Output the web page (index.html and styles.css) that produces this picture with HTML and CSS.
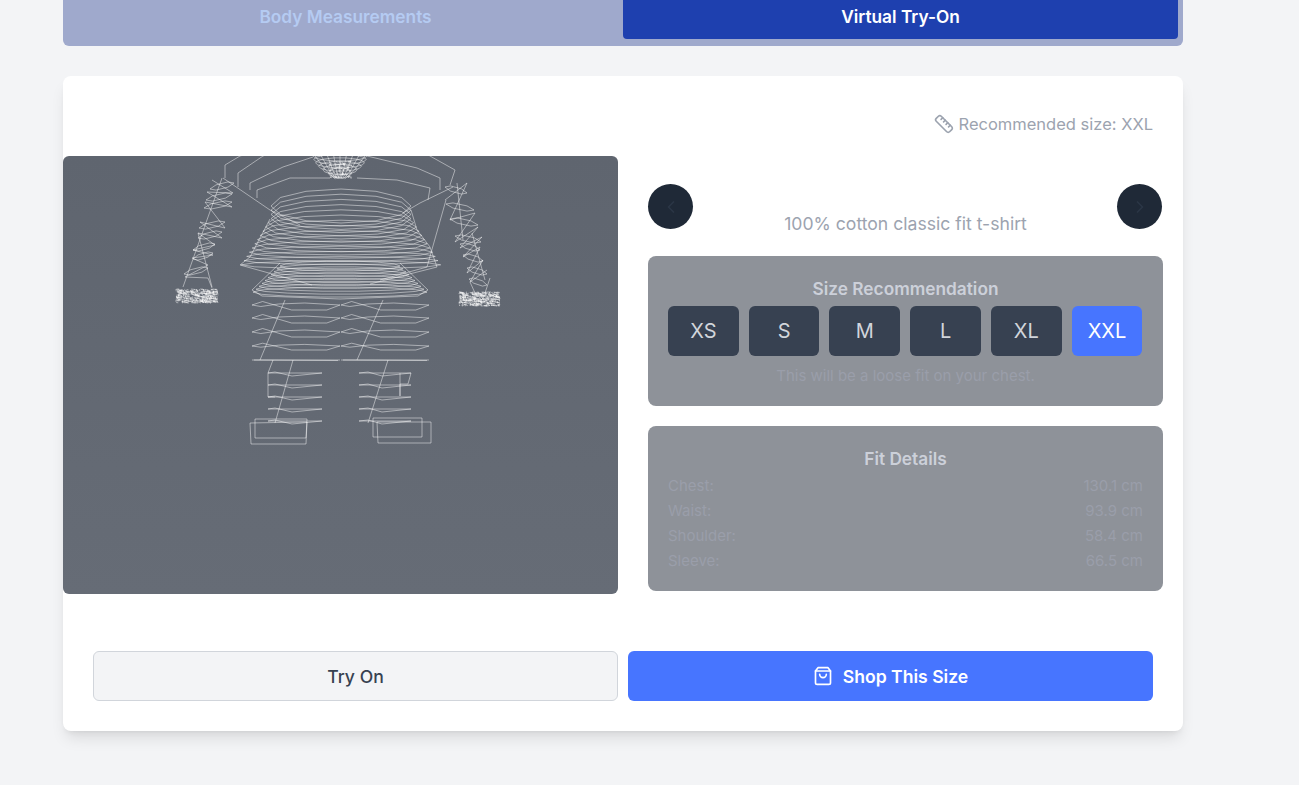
FILE: index.html
```html
<!DOCTYPE html>
<html lang="en">
<head>
    <meta charset="UTF-8">
    <meta name="viewport" content="width=device-width, initial-scale=1.0">
    <title>Virtual Try-On</title>
    <link rel="stylesheet" href="styles.css">
</head>
<body>
    <div class="page">
        <div class="tabs">
            <button class="tab">Body Measurements</button>
            <button class="tab active">Virtual Try-On</button>
        </div>

        <div class="card">
            <div class="card-head">
                <svg class="icon" width="20" height="20" viewBox="0 0 24 24">
                    <path d="M21.3 15.3a2.4 2.4 0 0 1 0 3.4l-2.6 2.6a2.4 2.4 0 0 1-3.4 0L2.7 8.7a2.41 2.41 0 0 1 0-3.4l2.6-2.6a2.41 2.41 0 0 1 3.4 0Z"/>
                    <path d="m14.5 12.5 2-2"/><path d="m11.5 9.5 2-2"/><path d="m8.5 6.5 2-2"/><path d="m17.5 15.5 2-2"/>
                </svg>
                <span>Recommended size: XXL</span>
            </div>

            <div class="main">
                <div class="viewer">
                    <svg id="model" class="model" width="555" height="438" viewBox="63 156 555 438"></svg>
                </div>

                <div class="side">
                    <div class="carousel">
                        <button class="arrow prev">
                            <svg class="icon" width="20" height="20" viewBox="0 0 24 24"><path d="m15 18-6-6 6-6"/></svg>
                        </button>
                        <p class="caption">100% cotton classic fit t-shirt</p>
                        <button class="arrow next">
                            <svg class="icon" width="20" height="20" viewBox="0 0 24 24"><path d="m9 18 6-6-6-6"/></svg>
                        </button>
                    </div>

                    <div class="panel">
                        <h3>Size Recommendation</h3>
                        <div class="sizes">
                            <button class="size">XS</button>
                            <button class="size">S</button>
                            <button class="size">M</button>
                            <button class="size">L</button>
                            <button class="size">XL</button>
                            <button class="size active">XXL</button>
                        </div>
                        <p class="hint">This will be a loose fit on your chest.</p>
                    </div>

                    <div class="panel details">
                        <h3>Fit Details</h3>
                        <div class="row"><span>Chest:</span><span>130.1 cm</span></div>
                        <div class="row"><span>Waist:</span><span>93.9 cm</span></div>
                        <div class="row"><span>Shoulder:</span><span>58.4 cm</span></div>
                        <div class="row"><span>Sleeve:</span><span>66.5 cm</span></div>
                    </div>
                </div>
            </div>

            <div class="actions">
                <button class="btn btn-light">Try On</button>
                <button class="btn btn-primary">
                    <svg class="icon" width="20" height="20" viewBox="0 0 24 24">
                        <path d="M6 2 3 6v14a2 2 0 0 0 2 2h14a2 2 0 0 0 2-2V6l-3-4Z"/>
                        <path d="M3 6h18"/>
                        <path d="M16 10a4 4 0 0 1-8 0"/>
                    </svg>
                    Shop This Size
                </button>
            </div>
        </div>
    </div>

    <script src="model.js"></script>
</body>
</html>
```

FILE: styles.css
```css
* {
    box-sizing: border-box;
}

body {
    font-family: Inter, "Liberation Sans", sans-serif;
    margin: 0;
    padding: 0;
    background-color: #f3f4f6;
    color: #1f2937;
}

button {
    font-family: inherit;
    border: none;
    cursor: pointer;
}

.icon {
    fill: none;
    stroke: currentColor;
    stroke-width: 2;
    stroke-linecap: round;
    stroke-linejoin: round;
    flex-shrink: 0;
}

.page {
    width: 1120px;
    margin-left: 63px;
    padding-bottom: 54px;
}

.tabs {
    display: flex;
    padding: 0 5px 7px;
    background-color: #9fa9cc;
    border-radius: 0 0 6px 6px;
}

.tab {
    flex: 1;
    height: 39px;
    padding: 0 0 6px;
    background: none;
    font-size: 17.3px;
    font-weight: 600;
    color: #b5cbf2;
    border-radius: 0 0 4px 4px;
}

.tab.active {
    background-color: #1e40af;
    color: #fff;
}

.card {
    margin-top: 30px;
    background: #fff;
    border-radius: 8px;
    box-shadow: 0 10px 15px -3px rgba(0, 0, 0, 0.1), 0 4px 6px -4px rgba(0, 0, 0, 0.1);
    padding-bottom: 30px;
}

.card-head {
    display: flex;
    justify-content: flex-end;
    align-items: center;
    gap: 5px;
    padding: 36px 30px 20px;
    font-size: 16.5px;
    line-height: 24px;
    color: #9ca3af;
}

.main {
    display: grid;
    grid-template-columns: 555px 515px;
    gap: 30px;
}

.viewer {
    height: 438px;
    background: linear-gradient(#5f656f, #666c76);
    border-radius: 6px;
    overflow: hidden;
}

.model {
    display: block;
}

.model polygon,
.model polyline {
    fill: none;
    stroke: #fff;
    stroke-opacity: 0.55;
    stroke-width: 0.85;
}

.carousel {
    position: relative;
    height: 100px;
    padding-top: 56px;
}

.caption {
    margin: 0;
    text-align: center;
    font-size: 17.6px;
    line-height: 24px;
    color: #9ca3af;
}

.arrow {
    position: absolute;
    top: 28px;
    width: 45px;
    height: 45px;
    display: flex;
    align-items: center;
    justify-content: center;
    padding: 0;
    border-radius: 50%;
    background-color: #1f2937;
    color: #2b3646;
}

.arrow.prev {
    left: 0;
}

.arrow.next {
    right: 1px;
}

.panel {
    padding: 21px 20px 20px;
    background-color: #8e9299;
    border-radius: 8px;
}

.panel h3 {
    margin: 0 0 5px;
    text-align: center;
    font-size: 17.3px;
    line-height: 24px;
    font-weight: 600;
    color: #ccd0d9;
}

.sizes {
    display: grid;
    grid-template-columns: repeat(6, 1fr);
    gap: 10px;
    width: 474.4px;
}

.size {
    height: 50px;
    padding: 0;
    font-size: 20px;
    color: #d1d5db;
    background-color: #374151;
    border-radius: 6px;
}

.size.active {
    background-color: #4775ff;
    color: #fff;
}

.hint {
    margin: 10px 0 0;
    text-align: center;
    font-size: 15px;
    line-height: 20px;
    color: #9a9eaa;
}

.details {
    margin-top: 20px;
    padding-bottom: 18px;
}

.details h3 {
    margin-bottom: 2px;
}

.row {
    display: flex;
    justify-content: space-between;
    font-size: 15px;
    line-height: 25px;
    color: #9a9eaa;
}

.actions {
    display: grid;
    grid-template-columns: 1fr 1fr;
    gap: 10px;
    margin-top: 57px;
    padding: 0 30px;
}

.btn {
    display: flex;
    align-items: center;
    justify-content: center;
    gap: 10px;
    height: 50px;
    font-size: 17.6px;
    border-radius: 6px;
}

.btn-light {
    background-color: #f3f4f6;
    border: 1px solid #d1d5db;
    font-weight: 500;
    color: #374151;
}

.btn-primary {
    background-color: #4775ff;
    font-weight: 600;
    color: #fff;
}
```

FILE: model.js
```js
// wireframe body, coordinates are the same as the page so it is easy to tune
const svg = document.getElementById('model');
const NS = 'http://www.w3.org/2000/svg';
let out = [];

let seed = 7;
function rnd() {
    seed = (seed * 16807) % 2147483647;
    return seed / 2147483647;
}

function line(points, closed) {
    const el = document.createElementNS(NS, closed ? 'polygon' : 'polyline');
    el.setAttribute('points', points.map(p => p[0].toFixed(1) + ',' + p[1].toFixed(1)).join(' '));
    out.push(el);
}

// flat ring seen from slightly above, n sides, tips left and right
function ring(cx, cy, rx, ry, n, tilt) {
    const pts = [];
    for (let i = 0; i < n; i++) {
        const a = (i / n) * Math.PI * 2;
        const x = Math.cos(a) * rx;
        pts.push([cx + x, cy + Math.sin(a) * ry + (x / rx) * (tilt || 0)]);
    }
    line(pts, true);
}

// one leg slice: flat on top, with a kink near the outer end and a sagging belly
function lobe(x1, x2, y, sag) {
    const w = x2 - x1;
    line([
        [x1, y], [x1 + w * 0.12, y - sag * 0.7], [x1 + w * 0.45, y + sag], [x1 + w * 0.85, y + sag],
        [x2, y], [x1 + w * 0.6, y - sag * 0.4], [x1 + w * 0.3, y - sag * 0.2], [x1 + w * 0.1, y + sag * 0.3]
    ], true);
}

// dense mesh: short strokes, mostly along the axes
function noiseBox(x1, y1, x2, y2, count) {
    for (let i = 0; i < count; i++) {
        const x = x1 + rnd() * (x2 - x1);
        const y = y1 + rnd() * (y2 - y1);
        const flat = rnd() > 0.4;
        const len = (rnd() - 0.5) * 10;
        const nx = Math.min(x2, Math.max(x1, x + (flat ? len : len * 0.2)));
        const ny = Math.min(y2, Math.max(y1, y + (flat ? len * 0.15 : len * 0.7)));
        line([[x, y], [nx, ny]]);
    }
}

// shoulders, the big arcs over the chest
const arcs = [
    [[225, 178], [225, 165], [240, 156], [262, 150]],
    [[238, 187], [238, 173], [263, 156], [280, 150]],
    [[250, 190], [250, 183], [283, 167], [313, 157]],
    [[257, 198], [257, 190], [290, 178], [330, 178]],
    [[357, 178], [397, 180], [430, 188], [428, 200]],
    [[440, 190], [440, 178], [417, 168], [367, 156]],
    [[450, 185], [455, 170], [430, 156], [420, 150]],
    [[223, 178], [270, 210], [300, 225]],
    [[453, 187], [420, 203], [403, 213]]
];
arcs.forEach(a => line(a));

// chest and belly, lens shaped rings that get flatter and wider going down
for (let i = 0; i < 15; i++) {
    const cy = 206 + i * 4.2;
    const ry = Math.max(4, 17 - i * 1.0);
    const rx = 70 + Math.max(0, i - 3) * 2.7;
    ring(341, cy, rx, ry, 12);
}
line([[270, 219], [250, 257], [240, 265], [312, 285]]);
line([[411, 210], [417, 230], [430, 247], [437, 267], [370, 284]]);

// hips
for (let i = 0; i < 10; i++) {
    ring(340, 266 + i * 2.9, 60 + i * 3, 5, 14);
}
line([[280, 263], [252, 290], [262, 296], [340, 299], [418, 296], [428, 290], [400, 263]]);

// upper legs
[[305, 5], [318, 5], [332, 5], [346, 4]].forEach(r => {
    lobe(252, 340, r[0], r[1]);
    lobe(341, 429, r[0], r[1]);
});
line([[252, 360], [340, 360]]);
line([[341, 360], [429, 360]]);
line([[254, 360], [338, 360.5]]);
line([[343, 360], [427, 360.5]]);
line([[285, 300], [260, 360]]);
line([[383, 300], [357, 360]]);

// lower legs
[373, 385, 397, 409, 421].forEach(y => {
    line([[268, y], [322, y], [292, y + 3], [275, y - 1], [268, y]]);
    line([[359, y], [411, y], [382, y + 3], [368, y - 1], [359, y]]);
});
line([[293, 360], [275, 423]]);
line([[388, 360], [368, 423]]);
line([[273, 360], [268, 373], [268, 397], [275, 397]]);
line([[411, 373], [408, 384], [400, 384], [400, 396], [400, 373]]);

// feet
line([[255, 419], [307, 419], [306, 438], [255, 438]], true);
line([[250, 423], [307, 422], [306, 444], [251, 444]], true);
line([[373, 418], [422, 418], [422, 437], [373, 437]], true);
line([[377, 422], [431, 422], [431, 443], [378, 443]], true);

// left arm: zigzag through the slice tips, then the slices themselves
line([
    [212, 180], [233, 193], [207, 192], [232, 207], [205, 202], [225, 228], [200, 222], [222, 238],
    [198, 233], [215, 245], [193, 250], [213, 255], [192, 258], [208, 265], [185, 277], [208, 278]
]);
[
    [222, 186, 12], [219, 197, 13], [218, 205, 14], [212, 225, 13], [210, 235, 12],
    [204, 247, 11], [203, 256, 10], [196, 271, 12]
].forEach(r => ring(r[0], r[1], r[2], 3, 6, -3));
line([[222, 178], [183, 287]]);
line([[198, 233], [212, 287]]);
line([[208, 278], [212, 288]]);

// right arm
line([
    [445, 200], [467, 183], [450, 220], [475, 213], [455, 242], [478, 227], [460, 248], [482, 237],
    [463, 257], [480, 247], [467, 273], [483, 260], [470, 282], [487, 270]
]);
[
    [456, 190, 11], [460, 207, 14], [464, 222, 14], [468, 239, 13], [470, 247, 10],
    [473, 258, 10], [477, 271, 10], [478, 282, 9]
].forEach(r => ring(r[0], r[1], r[2], 3, 6, 3));
line([[457, 183], [463, 240]]);
line([[472, 233], [485, 280]]);
line([[470, 282], [475, 293]]);
line([[490, 278], [485, 293]]);
line([[446, 200], [427, 267], [380, 280]]);

// hands and head have a very dense mesh
noiseBox(176, 289, 218, 303, 420);
noiseBox(459, 292, 500, 306, 420);
for (let i = 0; i < 6; i++) {
    ring(340, 156 + i * 3.4, 27 - i * i * 0.62, 5, 14);
}
for (let i = -4; i <= 4; i++) {
    line([[340 + i * 6.6, 154], [340 + i * 3.6, 170], [340 + i * 1.2, 179]]);
}
noiseBox(329, 161, 352, 178, 110);

out.forEach(el => svg.appendChild(el));
```
